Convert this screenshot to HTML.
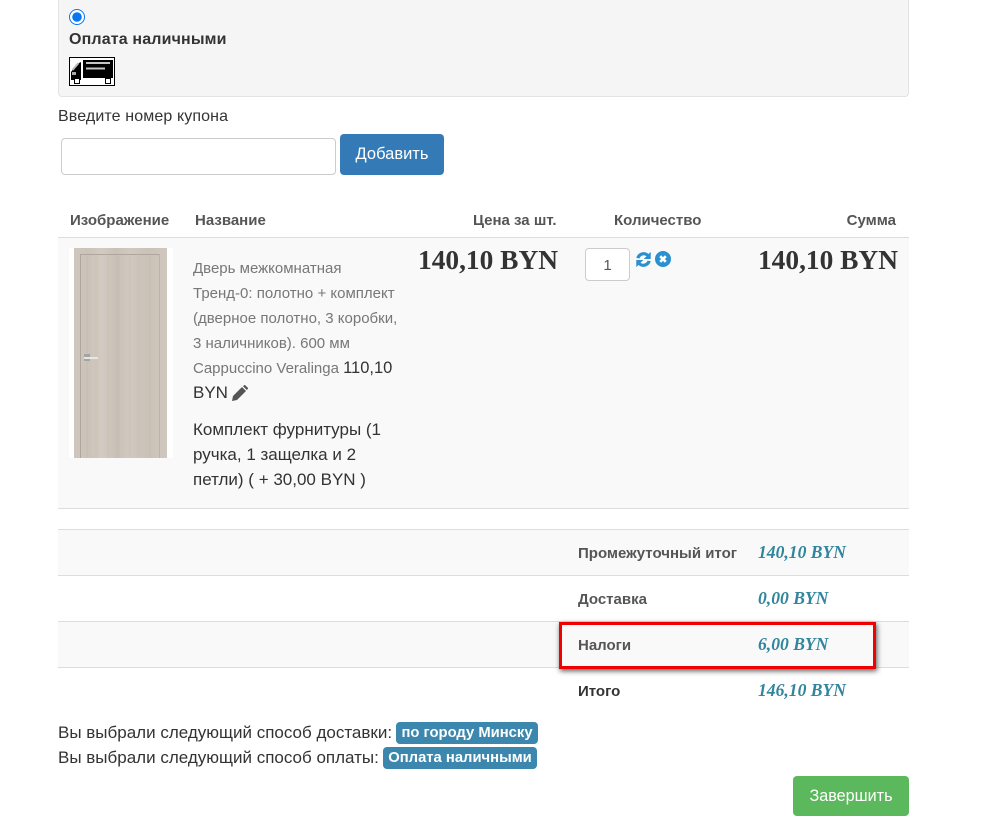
<!DOCTYPE html>
<html lang="ru"><head><meta charset="utf-8"><title>Оформление заказа</title>
<style>
html,body{margin:0;padding:0;background:#fff}
body{position:relative;width:990px;height:825px;overflow:hidden;font-family:"Liberation Sans",Arial,sans-serif;color:#333}
.a{position:absolute;white-space:nowrap}
.t{font-size:17px;line-height:20px}
.h{font-size:15px;font-weight:bold;color:#555;line-height:20px}
.g{font-size:15px;line-height:25px;color:#777}
.d{font-size:17px;line-height:25px;color:#333}
.line{position:absolute;left:58px;width:851px;height:1px;background:#ddd}
.band{position:absolute;left:58px;width:851px;background:#f9f9f9}
.p{font-family:"Liberation Serif",serif;font-weight:bold;font-size:27.400px;line-height:32px;color:#333}
.v{font-family:"Liberation Serif",serif;font-weight:bold;font-style:italic;font-size:17.600px;line-height:22px;color:#31859c}
.lb{background:#3c87ad;color:#fff;font-weight:bold;font-size:14.800px;line-height:22px;border-radius:4px;text-align:center;height:22px}
</style></head><body>
<div class="a" style="left:58px;top:-5px;width:849px;height:100px;background:#f5f5f5;border:1px solid #e3e3e3;border-radius:4px"></div>
<input class="a" type="radio" checked style="left:69px;top:9px;width:16px;height:16px;margin:0;accent-color:#0a75f0">
<div class="a" style="left:69px;top:31px;font-size:16px;line-height:18px;font-weight:bold;letter-spacing:.15px">Оплата наличными</div>
<svg class="a" style="left:69px;top:57px" width="46" height="29" viewBox="0 0 46 29">
<rect x=".5" y=".5" width="45" height="28" fill="#fff" stroke="#000"/>
<rect x="14" y="3" width="30" height="18" fill="#000"/>
<path d="M17 6h24M17 11.500h19" stroke="#c4c4c4" stroke-width="2"/>
<path d="M2 15l6-8 4-2v18H2z" fill="#000"/>
<path d="M3.500 13l6-7" stroke="#bbb" stroke-width="2"/>
<rect x="3" y="15" width="4" height="3" fill="#aaa"/>
<rect x="5.500" y="21.500" width="5" height="5" fill="#fff" stroke="#000"/>
<rect x="36.500" y="21.500" width="5" height="5" fill="#fff" stroke="#000"/>
</svg>
<div class="a" style="left:58px;top:108px;font-size:16px;line-height:18px;letter-spacing:.12px">Введите номер купона</div>
<div class="a" style="left:61px;top:138px;width:273px;height:35px;background:#fff;border:1px solid #ccc;border-radius:4px"></div>
<div class="a" style="left:340px;top:134px;width:104px;height:41px;background:#337ab7;border-radius:4px;color:#fff;font-size:16.500px;line-height:41px;text-align:center">Добавить</div>

<div class="a h" style="left:70px;top:211px">Изображение</div>
<div class="a h" style="left:195px;top:211px">Название</div>
<div class="a h" style="left:473px;top:211px">Цена за шт.</div>
<div class="a h" style="left:614px;top:211px">Количество</div>
<div class="a h" style="right:94px;top:211px">Сумма</div>
<div class="line" style="top:237px"></div>
<div class="band" style="top:238px;height:270px"></div>
<div class="line" style="top:508px"></div>

<svg class="a" style="left:69px;top:248px" width="104" height="210" viewBox="0 0 104 210">
<defs><linearGradient id="w" x1="0" x2="1" y1="0" y2="0">
<stop offset="0" stop-color="#cfc7bd"/><stop offset=".15" stop-color="#cbc2b8"/><stop offset=".3" stop-color="#d3cbc2"/><stop offset=".45" stop-color="#c9c0b6"/><stop offset=".6" stop-color="#d1c9c0"/><stop offset=".8" stop-color="#cac1b7"/><stop offset="1" stop-color="#d0c8be"/></linearGradient></defs>
<rect width="104" height="210" fill="#fff"/>
<rect x="5" y="0" width="93" height="210" fill="url(#w)"/>
<g fill="#b8afa4" opacity=".12">
<rect x="17" y="8" width="2" height="202"/><rect x="26" y="8" width="3" height="202"/><rect x="38" y="8" width="2" height="202"/><rect x="47" y="8" width="4" height="202"/><rect x="60" y="8" width="2" height="202"/><rect x="68" y="8" width="3" height="202"/><rect x="80" y="8" width="2" height="202"/>
</g>
<path d="M11.500 210V6.500H90.500" fill="none" stroke="#b0a79c" stroke-width="1"/>
<path d="M90.500 6.500V210" fill="none" stroke="#bdb4a9" stroke-width="1"/>
<rect x="15" y="106" width="6" height="7" fill="#a4a4a2"/>
<rect x="15" y="109" width="14" height="2" fill="#e8e6e3"/>
</svg>

<div class="a g" style="left:193px;top:256px">Дверь межкомнатная</div>
<div class="a g" style="left:193px;top:281px">Тренд-0: полотно + комплект</div>
<div class="a g" style="left:193px;top:306px">(дверное полотно, 3 коробки,</div>
<div class="a g" style="left:193px;top:331px">3 наличников). 600 мм</div>
<div class="a g" style="left:193px;top:356px">Cappuccino Veralinga <span class="d" style="font-size:16.500px">110,10</span></div>
<div class="a d" style="left:193px;top:380px">BYN</div>
<svg class="a" style="left:232px;top:385px" width="16" height="16" viewBox="0 0 16 16"><path d="M0 16l1-5L10 2l4 4-9 9zM11 1.200l1-1q.7-.4 1.300 0l2.500 2.500q.4.600 0 1.300l-1 1z" fill="#555"/></svg>
<div class="a d" style="left:193px;top:417px">Комплект фурнитуры (1</div>
<div class="a d" style="left:193px;top:442px">ручка, 1 защелка и 2</div>
<div class="a d" style="left:193px;top:467px">петли) ( + 30,00 BYN )</div>

<div class="a p" style="left:418px;top:244px">140,10 BYN</div>
<div class="a" style="left:585px;top:248px;width:43px;height:31px;background:#fff;border:1px solid #ccc;border-radius:4px;font-size:15px;line-height:33px;text-align:center;color:#555">1</div>
<svg class="a" style="left:635px;top:251px" width="17" height="17" viewBox="0 0 16 16"><path d="M1.200 6.500A7 7 0 0 1 12.700 2.800L14.800 .8V7.500H8.200L10.800 5A4.100 4.100 0 0 0 4.200 7zM14.800 9.500A7 7 0 0 1 3.300 13.200L1.200 15.200V8.500H7.800L5.200 11A4.100 4.100 0 0 0 11.800 9z" fill="#2b8fd0"/></svg>
<svg class="a" style="left:655px;top:251px" width="16" height="16" viewBox="0 0 16 16"><circle cx="8" cy="8" r="8" fill="#2b8fd0"/><path d="M5.200 5.200l5.600 5.600M10.800 5.200l-5.600 5.600" stroke="#fff" stroke-width="2.600"/></svg>
<div class="a p" style="right:92px;top:244px">140,10 BYN</div>

<div class="line" style="top:529px"></div>
<div class="band" style="top:530px;height:45px"></div>
<div class="line" style="top:575px"></div>
<div class="line" style="top:621px"></div>
<div class="band" style="top:622px;height:45px"></div>
<div class="line" style="top:667px"></div>

<div class="a h" style="left:578px;top:544px">Промежуточный итог</div>
<div class="a v" style="left:758px;top:541px">140,10 BYN</div>
<div class="a h" style="left:578px;top:590px">Доставка</div>
<div class="a v" style="left:758px;top:587px">0,00 BYN</div>
<div class="a h" style="left:578px;top:636px">Налоги</div>
<div class="a v" style="left:758px;top:633px">6,00 BYN</div>
<div class="a h" style="left:578px;top:682px;color:#333">Итого</div>
<div class="a v" style="left:758px;top:679px">146,10 BYN</div>
<div class="a" style="left:559px;top:622px;width:311px;height:41px;border:3px solid #f00000;box-shadow:1px 2px 5px rgba(0,0,0,.65)"></div>

<div class="a t" style="left:58px;top:723px">Вы выбрали следующий способ доставки:</div>
<div class="a lb" style="left:396px;top:722px;width:142px">по городу Минску</div>
<div class="a t" style="left:58px;top:748px">Вы выбрали следующий способ оплаты:</div>
<div class="a lb" style="left:383px;top:747px;width:154px">Оплата наличными</div>
<div class="a" style="left:793px;top:776px;width:116px;height:40px;background:#5cb85c;border-radius:4px;color:#fff;font-size:16.200px;line-height:40px;text-align:center">Завершить</div>
</body></html>
